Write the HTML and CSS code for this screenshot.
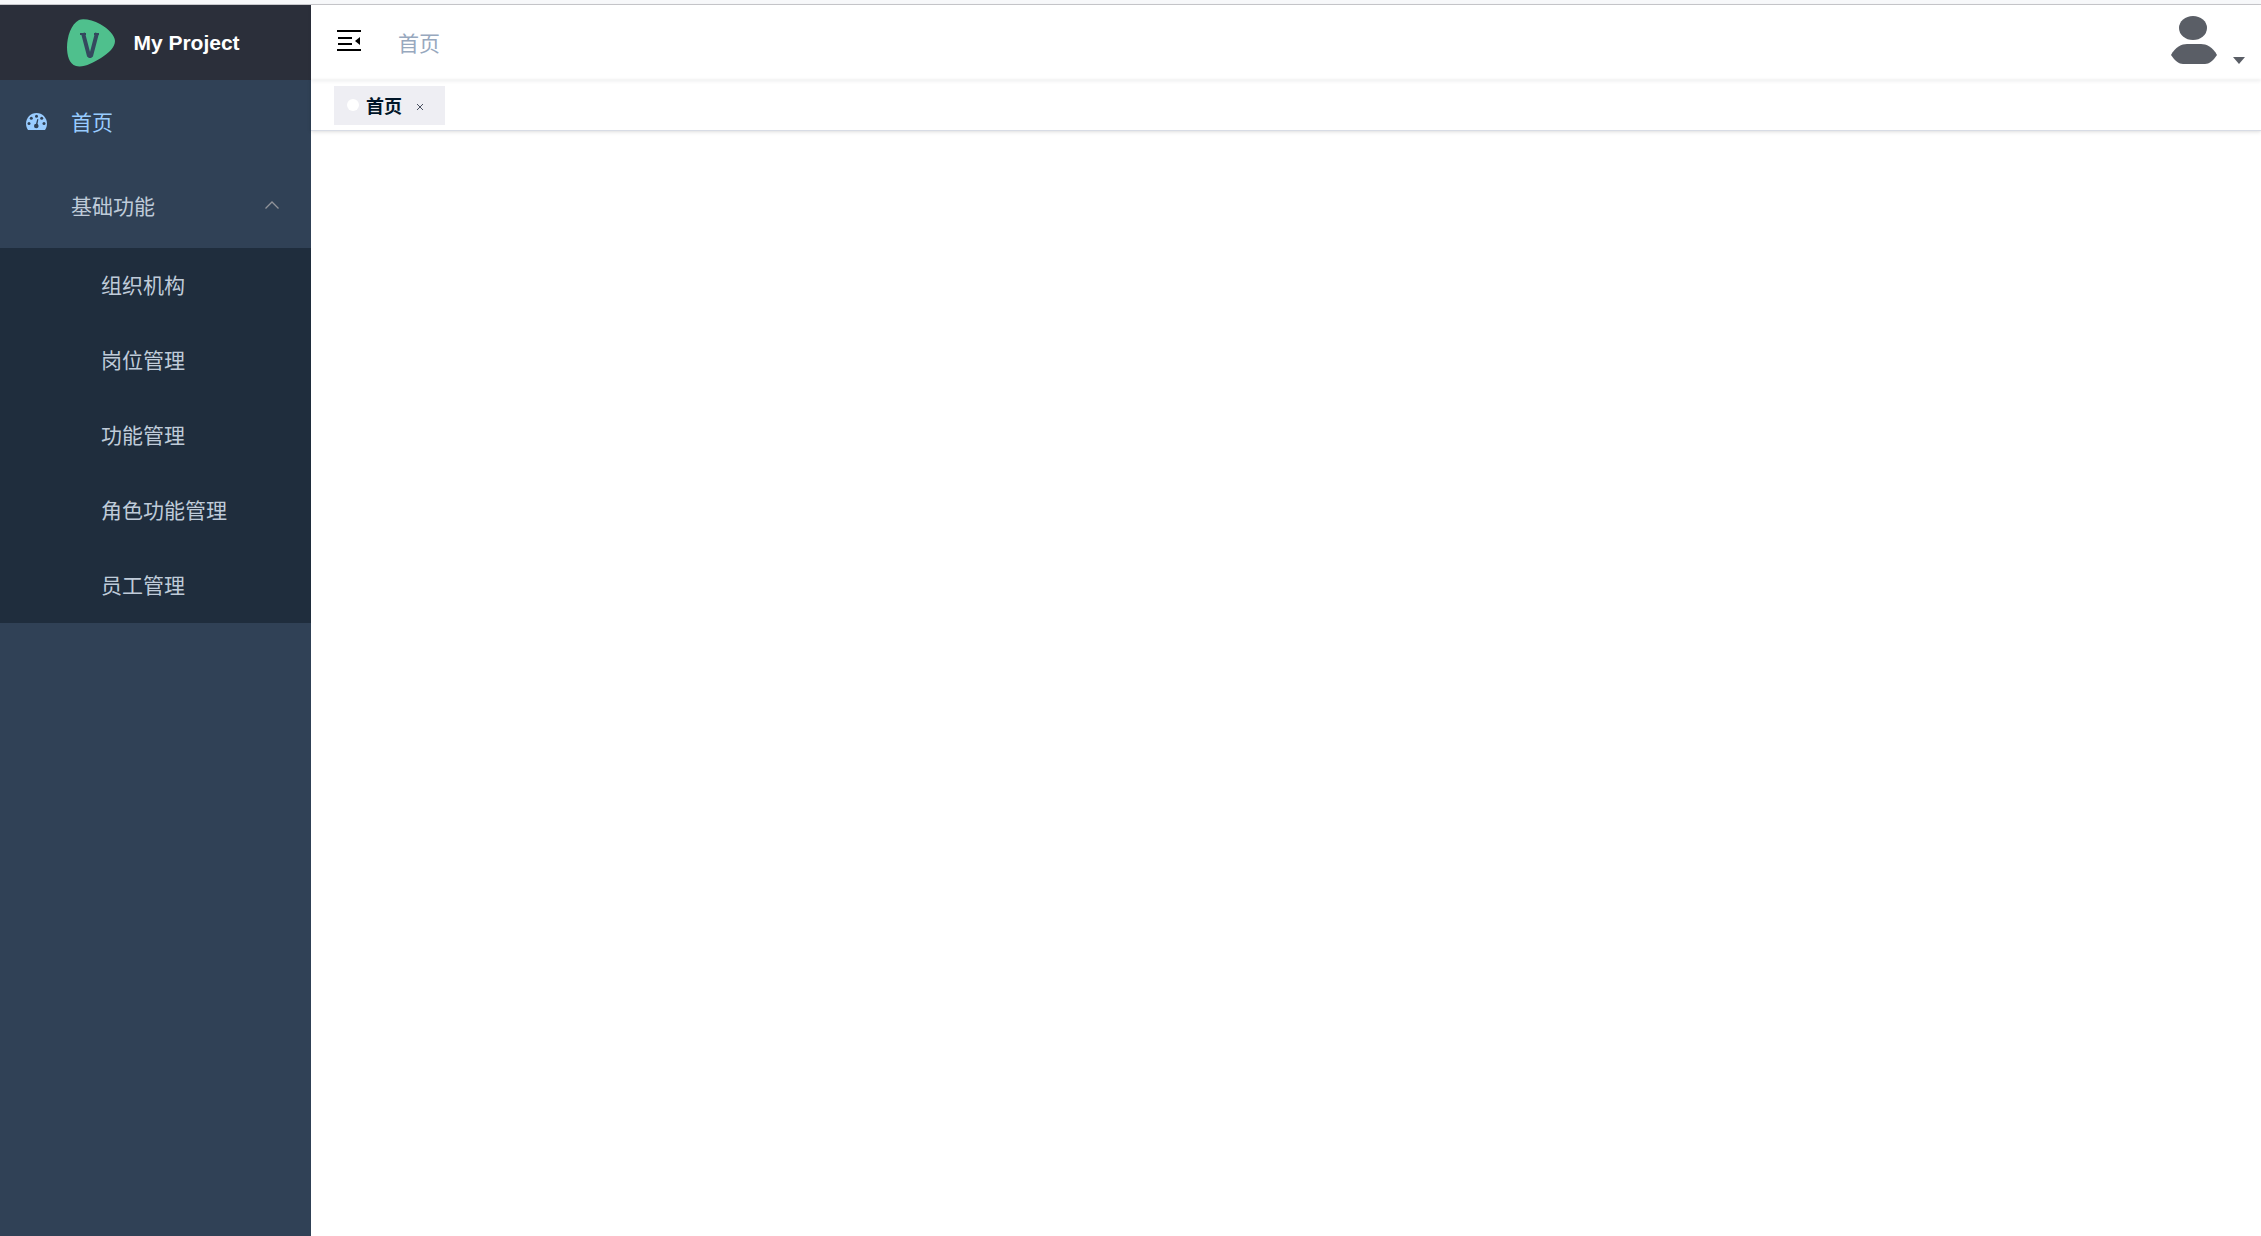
FILE: index.html
```html
<!DOCTYPE html>
<html lang="zh-CN">
<head>
    <meta charset="UTF-8">
    <meta name="viewport" content="width=device-width, initial-scale=1.0">
    <title>My Project</title>
    <link rel="stylesheet" href="styles.css">
</head>
<body>
    <div class="app">
        <!-- Sidebar -->
        <aside class="sidebar">
            <a class="logo" href="#">
                <svg class="logo-icon" viewBox="0 0 48 48" aria-hidden="true">
                    <path fill="#4fc08d" d="M12 1C16-1 26 1 33 5C42 10 48 17 48 22C48 28 42 34 34 39C26 44 16 49 9 47C2 45 0 36 0 28C0 18 4 5 12 1Z"/>
                    <path fill="none" stroke="#34495e" stroke-width="2" d="M13 15H19M27 15H32"/>
                    <path fill="none" stroke="#34495e" stroke-width="4" stroke-linejoin="bevel" d="M16 14L22 37H24L30 14"/>
                </svg>
                <span class="logo-title">My Project</span>
            </a>
            <nav>
                <ul class="menu">
                    <li>
                        <a class="menu-item active" href="#">
                            <svg class="menu-icon" viewBox="0 0 21 17" aria-hidden="true">
                                <path fill="currentColor" d="M2 17C0.7 15 0 13 0 10.500C0 4.700 4.700 0 10.500 0S21 4.700 21 10.500C21 13 20.300 15 19 17Z"/>
                                <g fill="#304156">
                                    <circle cx="3" cy="10.500" r="1.500"/>
                                    <circle cx="5.300" cy="5.300" r="1.500"/>
                                    <circle cx="10.500" cy="3.200" r="1.500"/>
                                    <circle cx="15.700" cy="5.300" r="1.500"/>
                                    <circle cx="18" cy="10.500" r="1.500"/>
                                    <circle cx="10.300" cy="13" r="2.300"/>
                                    <path d="M9.700 12L11.300 6L12.400 6.300L11.200 12.500Z"/>
                                </g>
                            </svg>
                            <span>首页</span>
                        </a>
                    </li>
                    <li>
                        <button class="menu-item" type="button" aria-expanded="true">
                            <span class="menu-icon"></span>
                            <span>基础功能</span>
                            <svg class="menu-arrow" viewBox="0 0 14 8" aria-hidden="true">
                                <path fill="none" stroke="#909399" stroke-width="1.300" d="M0.500 7.500L7 1L13.500 7.500"/>
                            </svg>
                        </button>
                        <ul class="submenu">
                            <li><a href="#">组织机构</a></li>
                            <li><a href="#">岗位管理</a></li>
                            <li><a href="#">功能管理</a></li>
                            <li><a href="#">角色功能管理</a></li>
                            <li><a href="#">员工管理</a></li>
                        </ul>
                    </li>
                </ul>
            </nav>
        </aside>

        <!-- Main area -->
        <div class="main">
            <header class="navbar">
                <button class="hamburger" type="button" aria-label="收起菜单">
                    <svg viewBox="0 0 24 22" aria-hidden="true">
                        <path fill="none" stroke="#000" stroke-width="2" d="M0 1H24M1 8H15M1 14H15M0 20H24"/>
                        <path d="M18 11L23 7V15Z"/>
                    </svg>
                </button>
                <span class="breadcrumb">首页</span>
                <button class="user" type="button" aria-label="用户菜单">
                    <svg class="avatar" viewBox="0 0 46 48" aria-hidden="true">
                        <ellipse cx="22" cy="12" rx="14" ry="12" fill="#5a5e66"/>
                        <path fill="#5a5e66" d="M0 39C4 31 11 28 16 28H30C35 28 42 31 46 39C42 45 38 48 34 48H12C8 48 4 45 0 39Z"/>
                    </svg>
                    <svg class="caret" viewBox="0 0 12 7" aria-hidden="true">
                        <path fill="#5a5e66" d="M0 0H12L6 7Z"/>
                    </svg>
                </button>
            </header>
            <div class="tags">
                <div class="tag">
                    <a href="#">首页</a>
                    <button class="tag-close" type="button" aria-label="关闭">
                        <svg viewBox="0 0 8 8" aria-hidden="true">
                            <path stroke="#495060" d="M1 1L7 7M7 1L1 7"/>
                        </svg>
                    </button>
                </div>
            </div>
            <main class="content"></main>
        </div>
    </div>
</body>
</html>
```

FILE: styles.css
```css
* {
    box-sizing: border-box;
}

body {
    margin: 0;
    font-family: "Liberation Sans", "Noto Sans CJK SC", Arial, sans-serif;
    font-size: 21px;
    background-color: #fff;
}

a {
    color: inherit;
    text-decoration: none;
}

ul {
    margin: 0;
    padding: 0;
    list-style: none;
}

button {
    padding: 0;
    border: none;
    background: none;
    font: inherit;
    cursor: pointer;
}

svg {
    display: block;
}

.app {
    display: flex;
    min-height: 100vh;
    border-top: 4px solid #f7f8fa;
}

/* Sidebar */
.sidebar {
    flex: 0 0 311px;
    border-top: 1px solid #c8c8cc;
    background-color: #304156;
    color: #bfcbd9;
}

.logo {
    display: flex;
    align-items: center;
    justify-content: center;
    gap: 18px;
    height: 75px;
    padding-right: 4px;
    background-color: #2b2f3a;
}

.logo-icon {
    width: 48px;
    height: 48px;
}

.logo-title {
    color: #fff;
    font-size: 21px;
    font-weight: bold;
}

.menu-item {
    display: flex;
    align-items: center;
    gap: 24px;
    width: 100%;
    height: 84px;
    padding: 0 32px 2px 26px;
    color: #bfcbd9;
}

.menu-item.active {
    color: #99ccff;
}

.menu-icon {
    width: 21px;
    height: 17px;
}

.menu-arrow {
    width: 14px;
    height: 8px;
    margin-left: auto;
}

.submenu {
    background-color: #1f2d3d;
}

.submenu a {
    display: flex;
    align-items: center;
    height: 75px;
    padding-bottom: 4px;
    padding-left: 101px;
}

/* Navbar */
.main {
    flex: 1;
    min-width: 0;
    border-top: 1px solid #c8c8cc;
}

.navbar {
    display: flex;
    align-items: center;
    height: 75px;
    padding: 0 16px 2px 26px;
    box-shadow: 0 1px 4px rgba(0, 21, 41, 0.08);
}

.hamburger svg {
    width: 24px;
    height: 22px;
}

.hamburger {
    padding-bottom: 2px;
}

.breadcrumb {
    margin-left: 37px;
    color: #97a8be;
}

.user {
    display: flex;
    align-items: flex-end;
    gap: 16px;
    margin-left: auto;
    padding-bottom: 4px;
}

.avatar {
    width: 46px;
    height: 48px;
}

.caret {
    width: 12px;
    height: 7px;
}

/* Opened page tags */
.tags {
    height: 51px;
    padding: 6px 23px;
    border-bottom: 1px solid #d8dce5;
    box-shadow: 0 1px 4px rgba(0, 0, 0, 0.12), 0 0 3px rgba(0, 0, 0, 0.04);
}

.tag {
    display: flex;
    align-items: center;
    width: fit-content;
    height: 39px;
    padding: 0 21px 2px 13px;
    background-color: #eeeef3;
    color: #001528;
    font-size: 18px;
    font-weight: bold;
}

.tag::before {
    content: "";
    width: 12px;
    height: 12px;
    margin-right: 7px;
    border-radius: 50%;
    background-color: #fff;
}

.tag-close {
    margin-left: 14px;
    padding-top: 5px;
}

.tag-close svg {
    width: 8px;
    height: 8px;
}
```
